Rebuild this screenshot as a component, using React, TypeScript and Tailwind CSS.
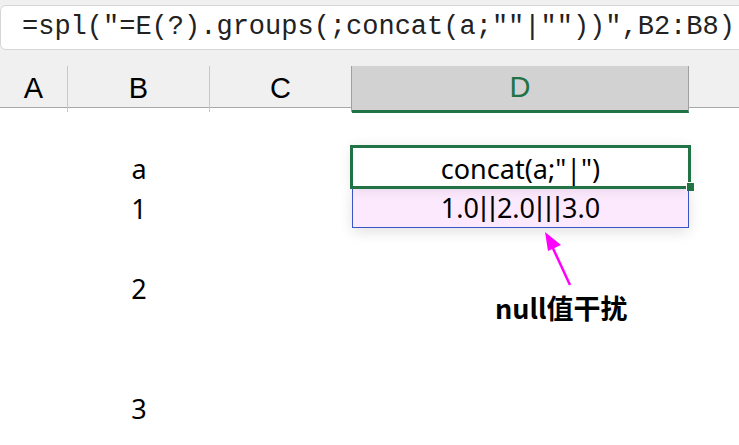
import React from 'react';

const cellFont = { fontFamily: '"Noto Sans", "Open Sans", sans-serif' };

const rows: { b?: string }[] = [
  {},
  { b: 'a' },
  { b: '1' },
  {},
  { b: '2' },
  {},
  {},
  { b: '3' },
];

// pipes in the result cell sit tight against the digits: a narrower face for them
function Piped({ text }: { text: string }) {
  return (
    <>
      {text.split('').map((ch, i) =>
        ch === '|' ? (
          <span key={i} className="px-[1px]" style={{ fontFamily: '"Liberation Sans", sans-serif' }}>
            |
          </span>
        ) : (
          <span key={i}>{ch}</span>
        )
      )}
    </>
  );
}

export default function App() {
  return (
    <div className="relative w-[739px] h-[445px] overflow-hidden bg-white text-black">
      {/* formula bar */}
      <div className="bg-[#f0f0f0] pt-[5px] pb-4">
        <div className="h-[45px] w-[760px] flex items-center rounded-md border border-[#d6d6d6] bg-white pl-[21px]">
          <span
            className="text-[27px] text-[#222] whitespace-pre leading-none"
            style={{ fontFamily: '"Liberation Mono", "DejaVu Sans Mono", monospace' }}
          >
            =spl("=E(?).groups(;concat(a;""|""))",B2:B8)
          </span>
        </div>
      </div>

      {/* column headers */}
      <div
        className="grid grid-cols-[68px_142px_142px_337px_1fr] h-[42px] bg-[#f0f0f0] border-b border-[#a8a8a8] text-[29px]"
        style={{ fontFamily: '"Liberation Sans", sans-serif' }}
      >
        <div className="flex items-center justify-center border-r border-[#c8c8c8]">A</div>
        <div className="flex items-center justify-center border-r border-[#c8c8c8]">B</div>
        <div className="flex items-center justify-center border-r border-[#a0a0a0]">C</div>
        <div className="flex items-center justify-center bg-[#d2d2d2] border-r border-[#a0a0a0] border-b-[3px] border-b-[#217346] text-[#217346] -mb-px">
          D
        </div>
        <div />
      </div>

      {/* sheet body */}
      <div className="grid grid-cols-[68px_142px_142px_337px_1fr] auto-rows-[40px] text-[27px]" style={cellFont}>
        {rows.map((r, i) => (
          <React.Fragment key={i}>
            <div />
            <div className="flex items-center justify-center leading-none">{r.b}</div>
            <div />
            {i === 1 ? (
              <div className="relative flex items-center justify-center leading-none bg-white z-10 shadow-[0_0_14px_rgba(0,0,0,0.12)]">
                concat(a;"|")
                <div className="absolute -left-[2px] -top-[3px] -right-[2px] -bottom-px border-[3px] border-[#217346]" />
                <div className="absolute -right-[5px] -bottom-[3px] w-[8px] h-[9px] bg-[#217346] border-l border-t border-white" />
              </div>
            ) : i === 2 ? (
              <div className="flex items-center justify-center leading-none bg-[#fde9fd] border border-t-0 border-[#3b55c9] shadow-[0_4px_14px_rgba(0,0,0,0.12)]">
                <Piped text="1.0||2.0|||3.0" />
              </div>
            ) : (
              <div />
            )}
            <div />
          </React.Fragment>
        ))}
      </div>

      {/* annotation */}
      <svg className="absolute left-0 top-0" width="739" height="445">
        <line x1="570" y1="285" x2="551" y2="244" stroke="#ff00ff" strokeWidth="2.5" />
        <polygon points="545,232 561,245 548,251" fill="#ff00ff" />
      </svg>
      <div
        className="absolute left-[495px] top-[294px] text-[27px] font-bold leading-none"
        style={{ fontFamily: '"Noto Sans CJK SC", "Noto Sans", sans-serif' }}
      >
        null值干扰
      </div>
    </div>
  );
}
